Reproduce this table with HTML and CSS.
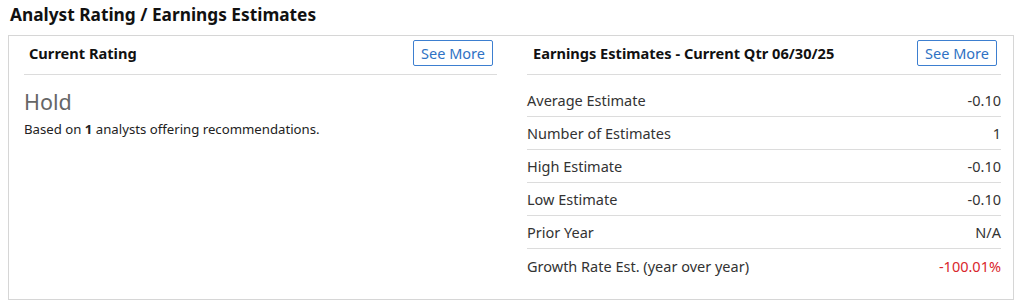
FILE: index.html
```html
<!DOCTYPE html>
<html>
<head>
<meta charset="utf-8">
<link rel="stylesheet" href="styles.css">
</head>
<body>
<h2 class="title">Analyst Rating / Earnings Estimates</h2>
<div class="panel">
  <section class="col col-left">
    <div class="col-head">
      <h3>Current Rating</h3>
      <button class="more">See More</button>
    </div>
    <div class="rating">Hold</div>
    <p class="basis">Based on <b>1</b> analysts offering recommendations.</p>
  </section>
  <section class="col col-right">
    <div class="col-head">
      <h3>Earnings Estimates - Current Qtr 06/30/25</h3>
      <button class="more">See More</button>
    </div>
    <div class="rows">
      <div class="row"><span>Average Estimate</span><span>-0.10</span></div>
      <div class="row"><span>Number of Estimates</span><span>1</span></div>
      <div class="row"><span>High Estimate</span><span>-0.10</span></div>
      <div class="row"><span>Low Estimate</span><span>-0.10</span></div>
      <div class="row"><span>Prior Year</span><span>N/A</span></div>
      <div class="row"><span>Growth Rate Est. (year over year)</span><span class="neg">-100.01%</span></div>
    </div>
  </section>
</div>
</body>
</html>
```
FILE: styles.css
```css
* { box-sizing: border-box; }
html, body { margin: 0; padding: 0; background: #fff; }
body {
  font-family: "Noto Sans", "Open Sans", sans-serif;
  color: #222;
  padding: 0 8px;
}
.title {
  margin: 0;
  padding: 3px 0 0 2px;
  height: 35px;
  font-size: 17.3px;
  font-weight: 700;
  color: #111;
  line-height: 24px;
}
.panel {
  width: 1006px;
  height: 265px;
  border: 1px solid #d6d6d6;
  display: grid;
  grid-template-columns: 502px 502px;
}
.col-left { padding: 0 14px 0 15px; }
.col-right { padding: 0 12px 0 16px; }
.col-head {
  display: flex;
  align-items: center;
  justify-content: space-between;
  height: 39px;
  padding-bottom: 5px;
  border-bottom: 1px solid #dcdcdc;
}
.col-head h3 {
  margin: 0 0 0 5px;
  font-size: 14.6px;
  font-weight: 700;
  color: #111;
}
.col-right .col-head h3 { margin-left: 6px; }
.more {
  font-family: inherit;
  font-size: 14.5px;
  color: #2f72c4;
  background: #fff;
  border: 1px solid #3d7fd0;
  border-radius: 2px;
  height: 26px;
  padding: 0 7px;
  margin-right: 4px;
  line-height: 22px;
  cursor: pointer;
}
.rating {
  margin-top: 14px;
  font-size: 21.5px;
  color: #666;
  line-height: 26px;
}
.basis {
  margin: 5px 0 0;
  font-size: 13.2px;
  color: #222;
}
.basis b { font-weight: 700; }
.rows { padding-top: 9px; }
.row {
  display: flex;
  justify-content: space-between;
  align-items: center;
  height: 33px;
  font-size: 14.5px;
  color: #333;
  border-bottom: 1px solid #dcdcdc;
}
.row:last-child { border-bottom: none; }
.neg { color: #d9262c; }
```
